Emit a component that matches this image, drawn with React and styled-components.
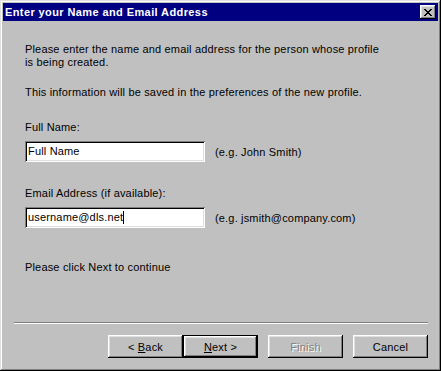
import React from "react";
import styled, { createGlobalStyle } from "styled-components";

const GlobalStyle = createGlobalStyle`
  body {
    margin: 0;
    background: #c0c0c0;
  }
`;

const Window = styled.div`
  box-sizing: border-box;
  width: 441px;
  height: 371px;
  padding: 3px;
  background: #c0c0c0;
  box-shadow: inset -1px -1px #000, inset 1px 1px #dfdfdf,
    inset -2px -2px #808080, inset 2px 2px #fff;
  display: flex;
  flex-direction: column;
  font-family: "Liberation Sans", Arial, sans-serif;
  font-size: 11px;
  letter-spacing: 0.17px;
  color: #000;
`;

const TitleBar = styled.div`
  height: 18px;
  background: #000080;
  color: #fff;
  display: flex;
  align-items: center;
  justify-content: space-between;
  padding: 0 2px;
  font-weight: bold;
  font-size: 11px;
  letter-spacing: 0.4px;
`;

const CloseButton = styled.div`
  box-sizing: border-box;
  width: 16px;
  height: 14px;
  background: #c0c0c0;
  box-shadow: inset -1px -1px #000, inset 1px 1px #fff,
    inset -2px -2px #808080, inset 2px 2px #dfdfdf;
  display: flex;
  align-items: center;
  justify-content: center;
`;

const Body = styled.div`
  flex: 1;
  display: flex;
  flex-direction: column;
  padding: 22px 0 0 22px;
`;

const Text = styled.div`
  line-height: 13px;
  margin-top: ${(p) => p.$gap || 0}px;
`;

const FieldRow = styled.div`
  display: flex;
  align-items: center;
  gap: 10px;
  margin-top: 7px;
`;

const Field = styled.div`
  box-sizing: border-box;
  width: 180px;
  height: 21px;
  background: #fff;
  box-shadow: inset 1px 1px #808080, inset -1px -1px #fff,
    inset 2px 2px #000, inset -2px -2px #dfdfdf;
  padding: 0 3px;
  display: flex;
  align-items: center;
  line-height: 13px;
`;

const Caret = styled.span`
  display: inline-block;
  width: 1px;
  height: 13px;
  background: #000;
`;

const Footer = styled.div`
  display: flex;
  flex-direction: column;
`;

const Separator = styled.div`
  margin: 0 10px 0 11px;
  border-top: 1px solid #808080;
  border-bottom: 1px solid #fff;
`;

const ButtonRow = styled.div`
  display: flex;
  justify-content: flex-end;
  padding: 11px 10px 10px 0;
`;

const Button = styled.div`
  box-sizing: border-box;
  width: 75px;
  height: 23px;
  margin-left: ${(p) => p.$gap || 0}px;
  display: flex;
  align-items: center;
  justify-content: center;
  background: #c0c0c0;
  color: ${(p) => (p.$disabled ? "#808080" : "#000")};
  text-shadow: ${(p) => (p.$disabled ? "1px 1px #fff" : "none")};
  box-shadow: ${(p) =>
    p.$default
      ? "inset 1px 1px #000, inset -1px -1px #000, inset -2px -2px #000, inset 2px 2px #fff, inset -3px -3px #808080, inset 3px 3px #dfdfdf"
      : "inset -1px -1px #000, inset 1px 1px #fff, inset -2px -2px #808080, inset 2px 2px #dfdfdf"};
  u {
    text-decoration: underline;
  }
`;

export default function App() {
  return (
    <>
      <GlobalStyle />
      <Window>
        <TitleBar>
          <span>Enter your Name and Email Address</span>
          <CloseButton>
            <svg width="8" height="7" viewBox="0 0 8 7">
              <path
                d="M0 0h2v1h1v1h2V1h1V0h2v1H7v1H6v1H5v1h1v1h1v1h1v1H6V6H5V5H3v1H2v1H0V6h1V5h1V4h1V3H2V2H1V1H0z"
                fill="#000"
              />
            </svg>
          </CloseButton>
        </TitleBar>
        <Body>
          <Text>
            Please enter the name and email address for the person whose profile
            <br />
            is being created.
          </Text>
          <Text $gap={17}>
            This information will be saved in the preferences of the new profile.
          </Text>
          <Text $gap={22}>Full Name:</Text>
          <FieldRow>
            <Field>Full Name</Field>
            <span>(e.g. John Smith)</span>
          </FieldRow>
          <Text $gap={25}>Email Address (if available):</Text>
          <FieldRow>
            <Field>
              username@dls.net
              <Caret />
            </Field>
            <span>(e.g. jsmith@company.com)</span>
          </FieldRow>
          <Text $gap={33}>Please click Next to continue</Text>
        </Body>
        <Footer>
          <Separator />
          <ButtonRow>
            <Button>
              &lt;&nbsp;<u>B</u>ack
            </Button>
            <Button $default>
              <u>N</u>ext&nbsp;&gt;
            </Button>
            <Button $gap={10} $disabled>
              Finish
            </Button>
            <Button $gap={10}>Cancel</Button>
          </ButtonRow>
        </Footer>
      </Window>
    </>
  );
}
